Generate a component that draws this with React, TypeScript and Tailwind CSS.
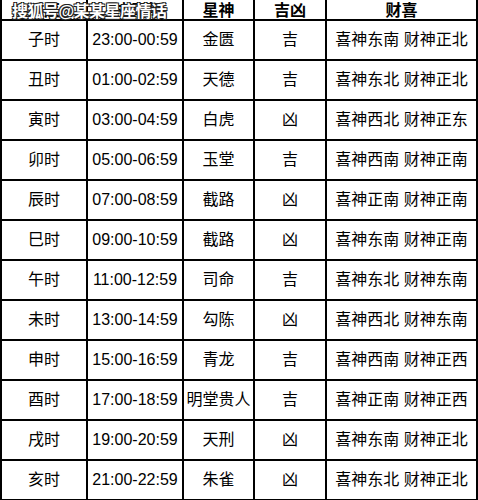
const rows: [string, string, string, string, string][] = [
  ["子时", "23:00-00:59", "金匮", "吉", "喜神东南 财神正北"],
  ["丑时", "01:00-02:59", "天德", "吉", "喜神东北 财神正北"],
  ["寅时", "03:00-04:59", "白虎", "凶", "喜神西北 财神正东"],
  ["卯时", "05:00-06:59", "玉堂", "吉", "喜神西南 财神正南"],
  ["辰时", "07:00-08:59", "截路", "凶", "喜神正南 财神正南"],
  ["巳时", "09:00-10:59", "截路", "凶", "喜神东南 财神正南"],
  ["午时", "11:00-12:59", "司命", "吉", "喜神东北 财神东南"],
  ["未时", "13:00-14:59", "勾陈", "凶", "喜神西北 财神东南"],
  ["申时", "15:00-16:59", "青龙", "吉", "喜神西南 财神正西"],
  ["酉时", "17:00-18:59", "明堂贵人", "吉", "喜神正南 财神正西"],
  ["戌时", "19:00-20:59", "天刑", "凶", "喜神东南 财神正北"],
  ["亥时", "21:00-22:59", "朱雀", "凶", "喜神东北 财神正北"],
];

const headers = ["时辰", "时间点", "星神", "吉凶", "财喜"];

export default function App() {
  return (
    <div className="relative w-[478px] h-[500px] overflow-hidden bg-white font-['Liberation_Sans','Noto_Sans_CJK_SC',sans-serif] text-black">
      <div className="grid grid-cols-[84px_94px_69px_70px_149px] gap-[2px] bg-black px-[2px] pb-[2px]">
        {/* header, top part cut off in the screenshot */}
        {headers.map((h) => (
          <div
            key={h}
            className="h-[19px] bg-white flex items-end justify-center overflow-hidden text-[16px] font-bold leading-[16px]"
          >
            {h}
          </div>
        ))}
        {rows.map((r) =>
          r.map((c, i) => (
            <div
              key={r[0] + i}
              className="h-[38px] bg-white flex items-center justify-center text-[16px] leading-none whitespace-nowrap"
            >
              {c}
            </div>
          ))
        )}
      </div>

      {/* watermark */}
      <div className="absolute left-[12px] top-[4px] text-[16px] font-bold leading-none text-white tracking-[-0.5px] [text-shadow:1px_1px_0_#222,-1px_-1px_0_#222,1px_-1px_0_#222,-1px_1px_0_#222,0_1px_1px_#000]">
        搜狐号@某某星座情话
      </div>
    </div>
  );
}
